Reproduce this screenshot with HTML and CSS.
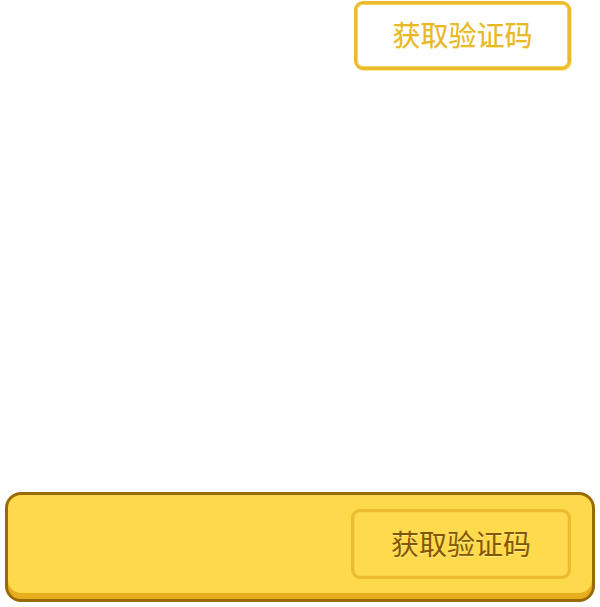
FILE: index.html
```html
<!DOCTYPE html>
<html lang="zh">
<head>
<meta charset="utf-8">
<link rel="stylesheet" href="styles.css">
</head>
<body>
<div class="page">
  <div class="top-row">
    <button class="code-btn code-btn--outline">获取验证码</button>
  </div>
  <div class="spacer"></div>
  <div class="field">
    <button class="code-btn code-btn--inset">获取验证码</button>
  </div>
</div>
</body>
</html>
```
FILE: styles.css
```css
html, body {
  margin: 0;
  padding: 0;
  background: #ffffff;
}
.page {
  width: 600px;
  height: 607px;
  display: flex;
  flex-direction: column;
}
.top-row {
  display: flex;
  justify-content: flex-end;
  padding: 1px 29px 0 0;
}
.code-btn {
  box-sizing: border-box;
  width: 217px;
  height: 69px;
  border-radius: 9px;
  font-family: "Noto Sans CJK SC", "Noto Sans", sans-serif;
  font-size: 28px;
  line-height: 1;
  padding: 0 0 3px 0;
  cursor: pointer;
}
.code-btn--outline {
  background: #ffffff;
  border: 3px solid #ebbb2a;
  color: #e8b72a;
  box-shadow: 1px 1px 0 #fde99a, inset 0 0 0 1px #f5d460;
  text-shadow: 0 1px 0 #fdeb9e;
}
.spacer {
  flex: 1;
}
.field {
  box-sizing: border-box;
  margin: 0 5px 5px 5px;
  height: 110px;
  border: 3px solid #9a6a04;
  border-radius: 16px;
  background: #ffd94c;
  box-shadow: inset 0 -6px 0 #e6ae1c;
  display: flex;
  justify-content: flex-end;
  padding: 14px 21px 0 0;
}
.code-btn--inset {
  width: 220px;
  height: 70px;
  background: #ffda4d;
  border: 3px solid #ebbb30;
  border-radius: 9px;
  color: #855600;
  box-shadow: inset 0 0 0 1px #f8d24a;
  text-shadow: 0 1px 0 #ffec8f;
}
```
